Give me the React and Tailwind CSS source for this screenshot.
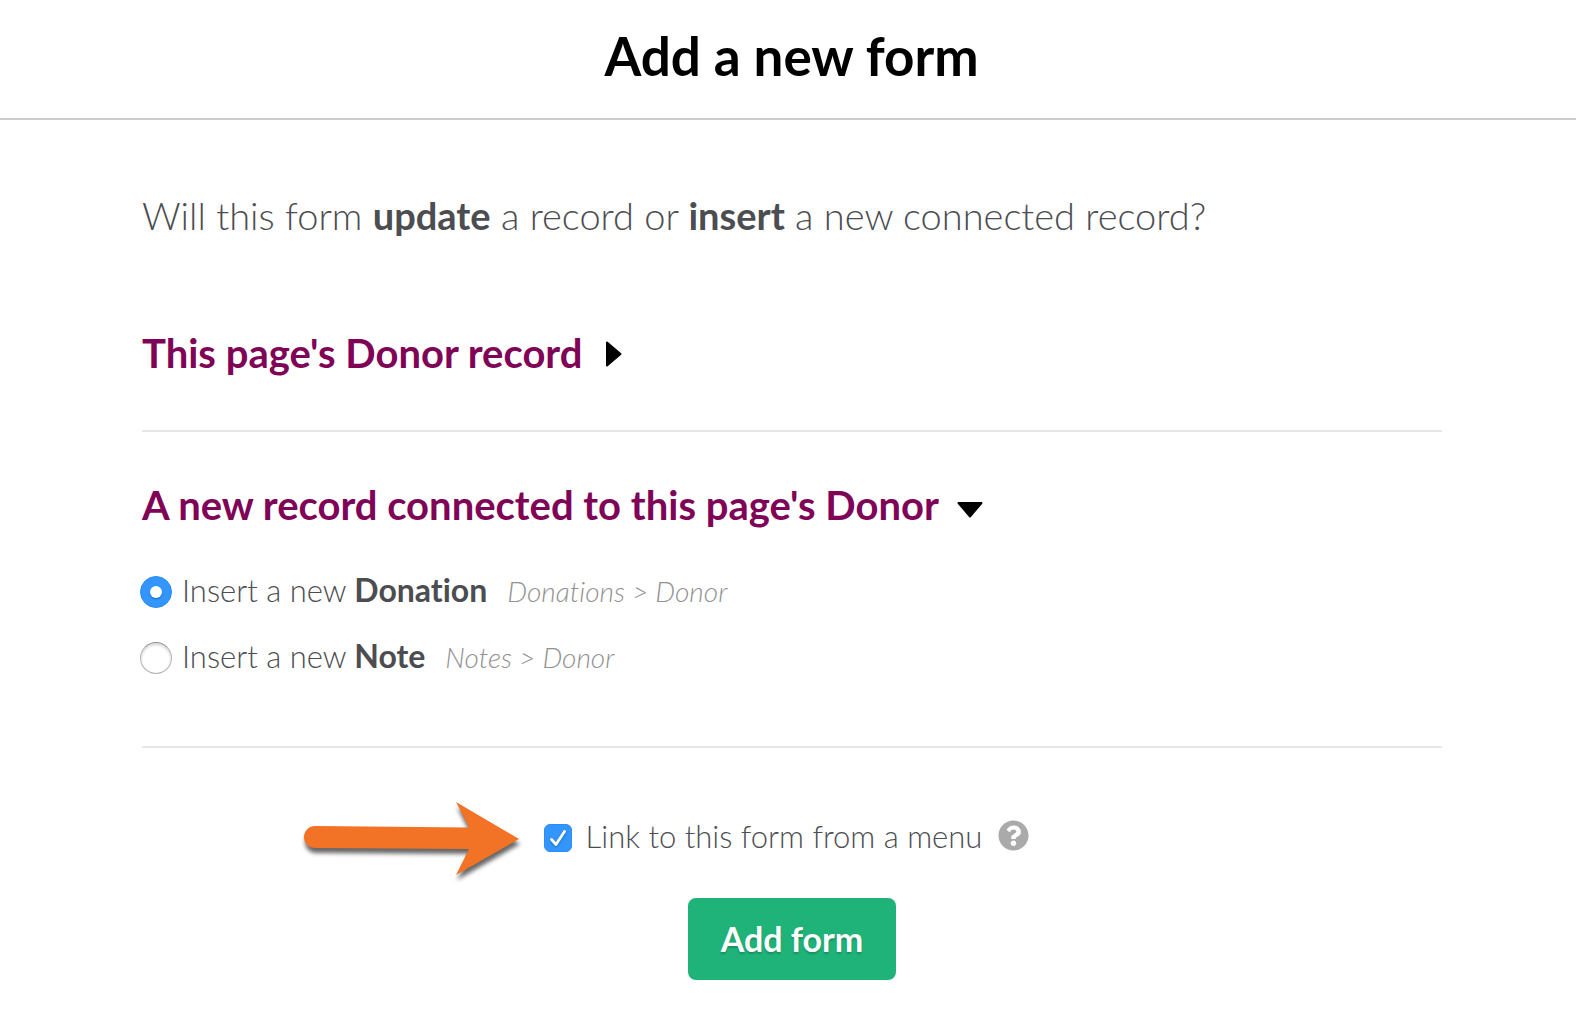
import { FaQuestionCircle } from "react-icons/fa";

function Choice({ name, path, checked }) {
  return (
    <label className="flex h-[66px] items-center text-[31px] leading-10">
      <span className="-ml-[2px] mr-[10px] grid shrink-0 place-items-center">
        <input
          type="radio"
          name="target"
          defaultChecked={checked}
          className="peer col-start-1 row-start-1 size-8 appearance-none rounded-full border border-t-[#909090] border-x-[#b4b4b4] border-b-[#b0b0b0] bg-white shadow-[inset_0_2px_3px_#d4d4d4] checked:border-[#2b8ef5] checked:bg-[#3396ff] checked:shadow-none"
        />
        <span className="pointer-events-none invisible col-start-1 row-start-1 size-3 rounded-full bg-white shadow-[0_1px_2px_#1a66b8] peer-checked:visible" />
      </span>
      <span className="pb-1">
        Insert a new <strong className="text-[32px] font-bold">{name}</strong>
      </span>
      <em className="ml-5 pb-[2px] text-[28px] text-[#929292]">{path}</em>
    </label>
  );
}

function Arrow() {
  return (
    <svg
      width="240"
      height="100"
      viewBox="0 0 240 100"
      className="pointer-events-none absolute right-full mr-5 drop-shadow-[1px_5px_2px_#00000099]"
      aria-hidden="true"
    >
      <path d="M31 38 185 39.5 172 14 235 51 172 87 185 61 31 60A11 11 0 0 1 31 38Z" fill="#f27226" />
    </svg>
  );
}

export default function App() {
  return (
    <main className="bg-white font-['Lato',sans-serif] font-light text-[#4c4d51] [font-variant-ligatures:no-common-ligatures]">
      <header className="flex h-[120px] items-center justify-center border-b-2 border-[#cccccc] pb-[6px] pl-[7px]">
        <h1 className="text-[53px] leading-16 font-bold text-black">Add a new form</h1>
      </header>
      <form className="pr-[134px] pl-[142px]" onSubmit={(e) => e.preventDefault()}>
        <p className="pt-[71px] text-[38px] leading-[48px]">
          Will this form <strong className="font-bold">update</strong> a record or{" "}
          <strong className="font-bold">insert</strong> a new connected record?
        </p>
        <section className="border-b-2 border-[#e6e6e6] pt-[90px] pb-[53px]">
          <h2 className="text-[40px] leading-[48px] font-bold text-[#7f0457]">
            <button type="button" className="flex items-center gap-6">
              This page's Donor record
              <svg width="16" height="26" viewBox="0 0 16 26" className="mt-[2px]" aria-hidden="true">
                <path d="M1 1.5 14.5 13 1 24.5Z" fill="#000" stroke="#000" strokeWidth="2" strokeLinejoin="round" />
              </svg>
            </button>
          </h2>
        </section>
        <section className="border-b-2 border-[#e6e6e6] pt-[49px] pb-[55px]">
          <h2 className="mb-[30px] text-[40px] leading-[48px] font-bold text-[#7f0457]">
            <button type="button" className="flex items-center gap-[18px]">
              A new record connected to this page's Donor
              <svg width="26" height="16" viewBox="0 0 26 16" className="mt-[10px]" aria-hidden="true">
                <path d="M1.5 1H24.5L13 14.5Z" fill="#000" stroke="#000" strokeWidth="2" strokeLinejoin="round" />
              </svg>
            </button>
          </h2>
          <Choice name="Donation" path="Donations > Donor" checked />
          <Choice name="Note" path="Notes > Donor" />
        </section>
        <div className="flex h-[150px] items-center justify-center pt-[29px] pr-[11px]">
          <div className="relative flex items-center text-[31px] leading-10">
            <Arrow />
            <label className="flex items-center gap-[14px]">
              <span className="grid place-items-center">
                <input
                  type="checkbox"
                  defaultChecked
                  className="peer col-start-1 row-start-1 size-7 appearance-none rounded-md border border-[#b0b0b0] bg-white checked:border-[#2b8ef5] checked:bg-[#3396ff]"
                />
                <svg
                  width="28"
                  height="28"
                  viewBox="0 0 28 28"
                  className="pointer-events-none invisible col-start-1 row-start-1 drop-shadow-[0_1px_1px_#1a66b8] peer-checked:visible"
                  aria-hidden="true"
                >
                  <path d="M7.5 15.5 12 20.5 20.5 7.5" fill="none" stroke="#fff" strokeWidth="2.8" strokeLinecap="round" strokeLinejoin="round" />
                </svg>
              </span>
              <span className="pb-1">Link to this form from a menu</span>
            </label>
            <button type="button" aria-label="Help" className="mb-1 ml-4 text-[#aaaaaa]">
              <FaQuestionCircle size={31} />
            </button>
          </div>
        </div>
        <div className="flex justify-center">
          <button
            type="submit"
            className="h-[82px] rounded-lg bg-[#1fb379] px-[33px] pb-px text-[34px] font-bold text-white text-shadow-[0_2px_2px_#00000033]"
          >
            Add form
          </button>
        </div>
      </form>
    </main>
  );
}
